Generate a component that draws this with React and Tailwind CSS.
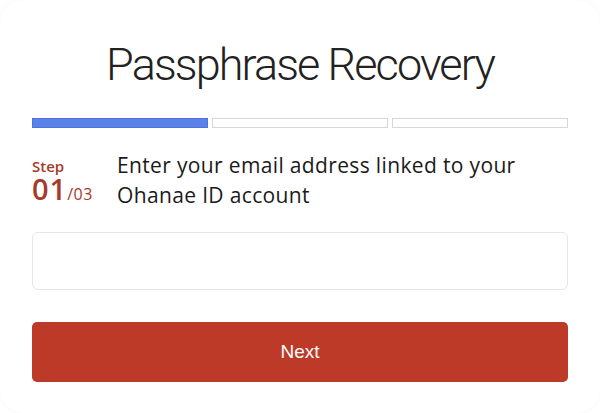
export default function App() {
  return (
    <div className="w-[600px] h-[413px] bg-white overflow-hidden">
      <div className="h-full rounded-[24px] bg-white shadow-[0_0_6px_rgba(0,0,0,0.04)] px-8 pt-[38px] font-['Inter',sans-serif]">
        <h1 className="text-center text-[45px] leading-[54px] font-light text-[#222] tracking-[-1.9px] font-['Roboto',sans-serif]">Passphrase Recovery</h1>
        <div className="mt-[26px] flex gap-[4px]">
          <div className="h-[10px] flex-1 bg-[#5b82e8] border border-[#4f74d6]"></div>
          <div className="h-[10px] flex-1 bg-white border border-[#d6d6d6]"></div>
          <div className="h-[10px] flex-1 bg-white border border-[#d6d6d6]"></div>
        </div>
        <div className="mt-[22px] flex gap-[20px]">
          <div className="w-[65px] pt-[9px] text-[#a63a28] font-['Open_Sans',sans-serif]">
            <div className="text-[15px] leading-[15px] font-semibold">Step</div>
            <div className="flex items-baseline">
              <span className="text-[29px] leading-[30px] font-semibold tracking-[1px]">01</span>
              <span className="text-[16px] leading-[16px] tracking-[0.5px]">/03</span>
            </div>
          </div>
          <div className="text-[21px] leading-[30px] tracking-[0.35px] text-[#1a1a1a] font-['Open_Sans',sans-serif]">
            Enter your email address linked to your<br />Ohanae ID account
          </div>
        </div>
        <div className="mt-[22px] h-[58px] rounded-[6px] border border-[#e6e6e6] bg-white"></div>
        <button className="mt-[32px] w-full h-[60px] rounded-[5px] bg-[#bd3a28] text-white text-[19px] font-['Liberation_Sans',sans-serif]">Next</button>
      </div>
    </div>
  );
}
